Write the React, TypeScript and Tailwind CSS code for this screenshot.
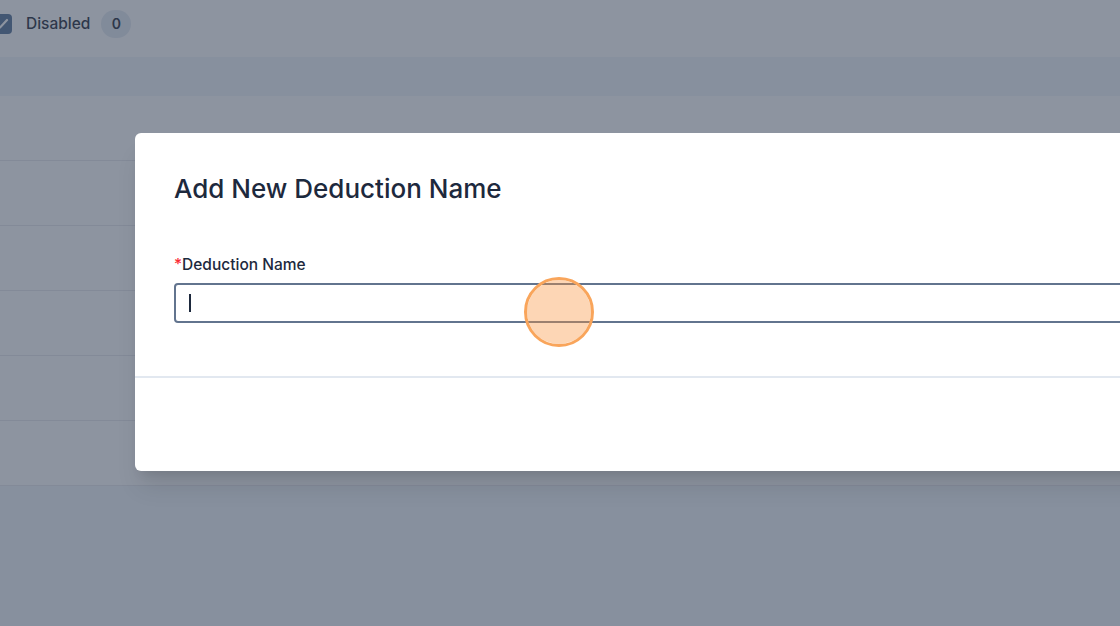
const rows = [0, 1, 2, 3, 4, 5];

function PageBehind() {
  return (
    <div className="flex h-full flex-col bg-slate-100">
      <div className="h-[57px] bg-white">
        <div className="flex h-12 items-center">
          <span className="ml-[-8px] flex h-5 w-5 items-center justify-center rounded-[4px] bg-[#46668f]">
            <svg viewBox="0 0 20 20" className="h-5 w-5" fill="none">
              <path d="M5 10.5l3 3 7-7.5" stroke="#fff" strokeWidth="2.2" strokeLinecap="round" strokeLinejoin="round" />
            </svg>
          </span>
          <span className="ml-3.5 text-[15.5px] font-medium text-slate-900">Disabled</span>
          <span className="ml-[11px] flex h-7 w-[30px] items-center justify-center rounded-full bg-slate-200 text-sm font-semibold text-slate-900">
            0
          </span>
        </div>
      </div>
      <div className="h-[39px] bg-slate-100" />
      <div className="bg-white">
        {rows.map((r) => (
          <div key={r} className="h-[65px] border-b border-gray-200" />
        ))}
      </div>
    </div>
  );
}

function DeductionModal() {
  return (
    <div className="absolute left-[135px] top-[133px] w-[1100px] rounded-md bg-white shadow-xl">
      <div className="pl-[39px] pr-10 pt-10 pb-[53px]">
        <h2 className="text-[26px] leading-8 font-medium text-slate-800">Add New Deduction Name</h2>
        <label className="mt-[50px] block text-[15.5px] leading-5 font-medium text-slate-800">
          <span className="text-red-500">*</span>Deduction Name
        </label>
        <div className="relative mt-2 flex h-10 items-center rounded border-2 border-slate-500 bg-white px-[13px]">
          <span className="h-[18px] w-[2px] bg-slate-800" />
        </div>
      </div>
      <div className="h-[95px] border-t-2 border-slate-200" />
    </div>
  );
}

export default function App() {
  return (
    <div className="relative h-[626px] w-full overflow-hidden font-['Inter',sans-serif]">
      <PageBehind />
      <div className="absolute inset-0 bg-[#414c61]/60" />
      <DeductionModal />
      <div className="absolute left-[524px] top-[277px] h-[70px] w-[70px] rounded-full border-[3px] border-[#f9a55b] bg-[rgba(251,146,60,0.38)] bg-clip-padding" />
    </div>
  );
}
